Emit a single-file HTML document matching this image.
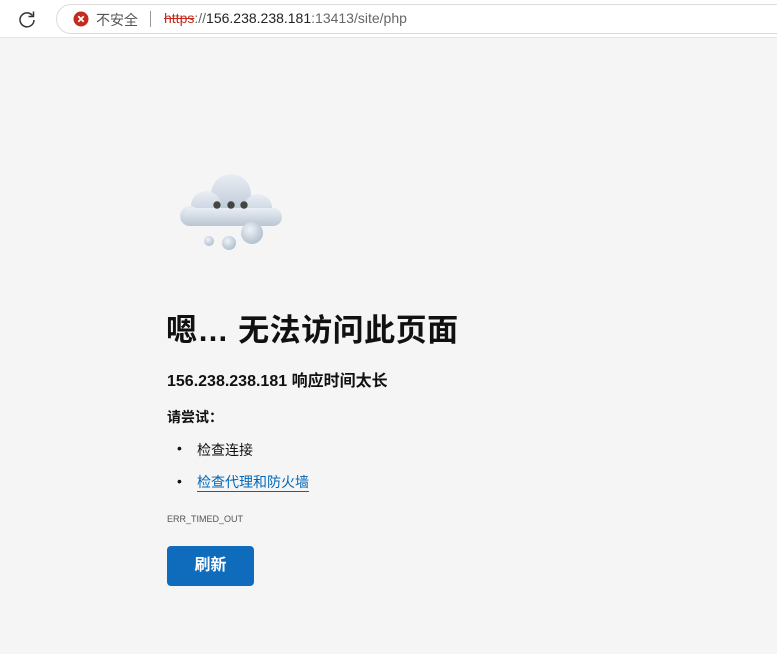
<!DOCTYPE html>
<html><head><meta charset="utf-8"><style>
*{margin:0;padding:0;box-sizing:border-box}
body{width:777px;height:654px;background:#f5f5f5;font-family:"Liberation Sans","Noto Sans CJK SC",sans-serif;position:relative;overflow:hidden;color:#111}
.top{position:absolute;left:0;top:0;width:777px;height:38px;background:#fff;border-bottom:1px solid #e5e5e5}
.addr{position:absolute;left:56px;top:4px;width:760px;height:30px;border:1px solid #dcdcdc;border-radius:15px;background:#fff}
.t{position:absolute;white-space:nowrap}
</style></head><body>
<div class="top">
<svg style="position:absolute;left:17px;top:9px" width="20" height="20" viewBox="0 0 20 20"><path d="M15.5 6.5A7 7 0 1 0 17 11" fill="none" stroke="#333" stroke-width="1.5"/><path d="M16.5 2.5v5h-5" fill="none" stroke="#333" stroke-width="1.5"/></svg>
<div class="addr"></div>
<svg style="position:absolute;left:73px;top:11px" width="16" height="16" viewBox="0 0 16 16"><circle cx="8" cy="8" r="7.5" fill="#c42b1c"/><path d="M5.3 5.3l5.4 5.4M10.7 5.3l-5.4 5.4" stroke="#fff" stroke-width="1.8"/></svg>
<div class="t" style="left:96px;top:10px;font-size:14px;color:#555">不安全</div>
<div style="position:absolute;left:150px;top:11px;width:1px;height:16px;background:#999"></div>
<div class="t" style="left:164px;top:10px;font-size:14px;color:#222"><span style="color:#c42b1c;text-decoration:line-through">https</span><span style="color:#666">://</span>156.238.238.181<span style="color:#666">:13413/site/php</span></div>
</div>
<svg style="position:absolute;left:175px;top:168px" width="115" height="88" viewBox="175 168 115 88">
<defs><linearGradient id="g" x1="0" y1="0" x2="0" y2="1"><stop offset="0" stop-color="#eaeef4"/><stop offset="1" stop-color="#b9c6d4"/></linearGradient>
<radialGradient id="b" cx="0.4" cy="0.35" r="0.7"><stop offset="0" stop-color="#eef2f7"/><stop offset="1" stop-color="#aebdcd"/></radialGradient></defs>
<g fill="url(#g)">
<circle cx="231" cy="194" r="20"/><circle cx="206" cy="206" r="15"/><circle cx="258" cy="208" r="14"/><circle cx="190" cy="216" r="10"/><circle cx="273" cy="217" r="9"/>
<rect x="185" y="208" width="93" height="18" rx="6"/></g>
<circle cx="217" cy="205" r="3.7" fill="#444"/><circle cx="231" cy="205" r="3.7" fill="#444"/><circle cx="244" cy="205" r="3.7" fill="#444"/>
<circle cx="209" cy="241" r="5" fill="url(#b)"/><circle cx="229" cy="243" r="7" fill="url(#b)"/><circle cx="252" cy="233" r="11" fill="url(#b)"/>
</svg>
<div class="t" style="left:166px;top:305px;font-size:31px;font-weight:bold;color:#111;letter-spacing:0.5px">嗯… 无法访问此页面</div>
<div class="t" style="left:167px;top:367px;font-size:16px;font-weight:bold">156.238.238.181 响应时间太长</div>
<div class="t" style="left:167px;top:407px;font-size:14px;font-weight:bold">请尝试：</div>
<div class="t" style="left:177px;top:440px;font-size:14px">•</div>
<div class="t" style="left:197px;top:440px;font-size:14px">检查连接</div>
<div class="t" style="left:177px;top:473px;font-size:14px">•</div>
<div class="t" style="left:197px;top:473px;font-size:14px;color:#0067b8;border-bottom:1px solid #0067b8;line-height:18px">检查代理和防火墙</div>
<div class="t" style="left:167px;top:514px;font-size:9px;color:#555">ERR_TIMED_OUT</div>
<div style="position:absolute;left:167px;top:546px;width:87px;height:40px;background:#0f6cbd;border-radius:4px;color:#fff;font-size:16px;font-weight:bold;text-align:center;line-height:40px">刷新</div>
</body></html>
